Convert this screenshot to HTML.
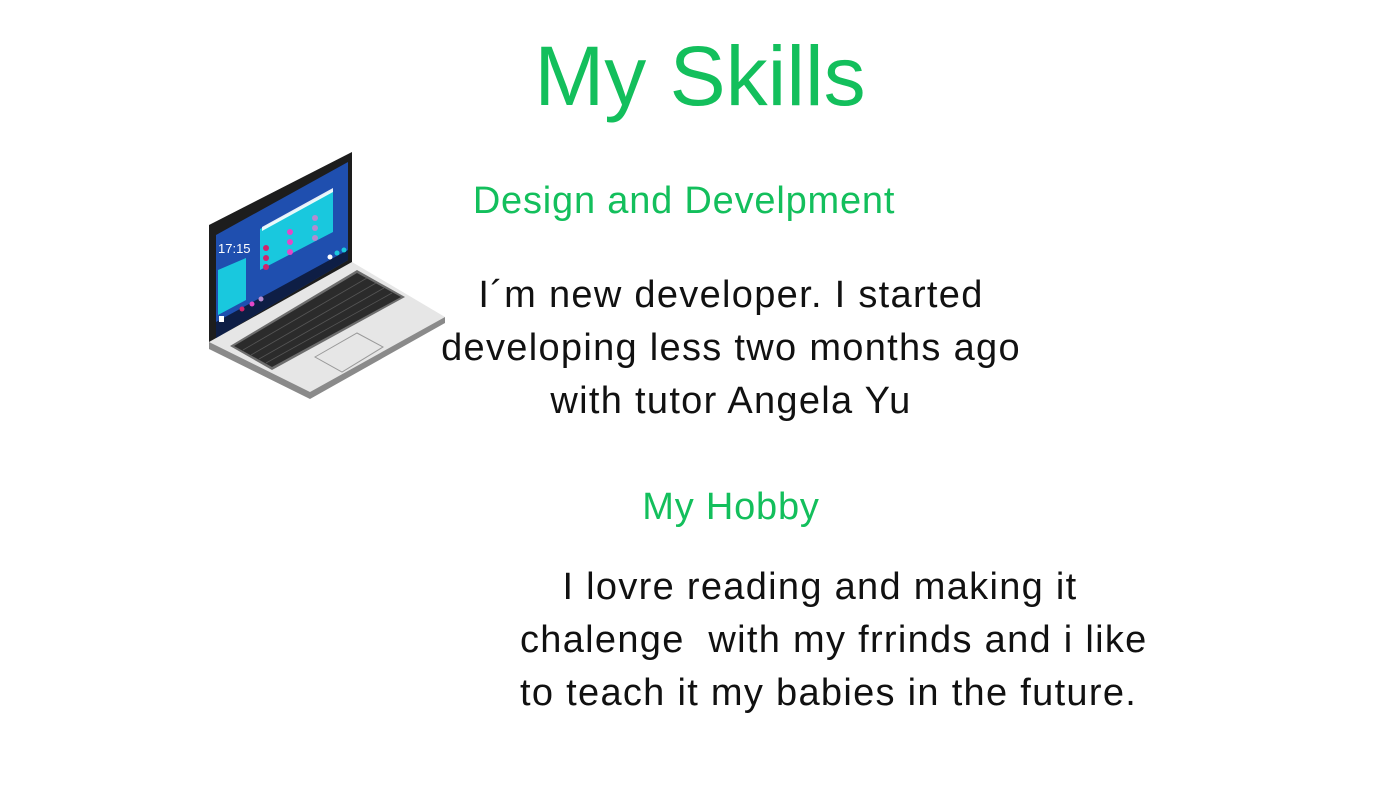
<!DOCTYPE html>
<html><head><meta charset="utf-8"><style>
html,body{margin:0;padding:0;background:#fff;width:1400px;height:800px;overflow:hidden;position:relative;font-family:"Liberation Sans","DejaVu Sans",sans-serif}
.t{position:absolute;white-space:nowrap;text-align:center}
.g{color:#13bf5c}
.b{color:#111}
</style></head><body>
<div class="t g" style="left:400px;width:600px;top:26px;font-size:84px;line-height:100px">My Skills</div>
<div class="t g" style="left:384px;width:600px;top:178px;font-size:38px;line-height:46px;letter-spacing:0.8px">Design and Develpment</div>
<div class="t b" style="left:431px;width:600px;top:269px;font-size:38px;line-height:53px;letter-spacing:1.3px">I´m new developer. I started<br>developing less two months ago<br>with tutor Angela Yu</div>
<div class="t g" style="left:431px;width:600px;top:484px;font-size:38px;line-height:46px;letter-spacing:0.8px">My Hobby</div>
<div class="t b" style="left:520px;width:600px;top:561px;font-size:38px;line-height:53px;letter-spacing:1.3px">I lovre reading and making it<br>chalenge&nbsp; with my frrinds and i like<br>to teach it my babies in the future.</div>
<svg style="position:absolute;left:0;top:0" width="1400" height="800" viewBox="0 0 1400 800">
<polygon points="209,342 352,262 445,317 310,392 209,348" fill="#e6e6e6"/>
<polygon points="209,342 310,392 445,317 445,323 310,399 209,349" fill="#8a8a8a"/>
<polygon points="230,346 357,270 405,297 272,370" fill="#6d6d6d"/>
<polygon points="234,346 357,273 401,297 272,367" fill="#2b2b2b"/>
<g stroke="#555" stroke-width="0.8">
<line x1="243" y1="350" x2="367" y2="278"/><line x1="251" y1="355" x2="376" y2="283"/><line x1="259" y1="359" x2="384" y2="288"/><line x1="266" y1="363" x2="392" y2="293"/>
</g>
<polygon points="315,357 357,333 383,347 342,372" fill="#e6e6e6" stroke="#999" stroke-width="1"/>
<polygon points="209,225 352,152 352,262 209,342" fill="#1d1d1d"/>
<polygon points="216,235 348,162 348,260 216,338" fill="#1f4faf"/>
<polygon points="216,322 348,250 348,260 216,338" fill="#0e1e45"/>
<polygon points="260,229 333,190 333,232 260,270" fill="#19c8de"/>
<polygon points="262,227 333,188 333,192 262,231" fill="#fff" opacity=".9"/>
<polygon points="218,270 246,258 246,300 218,315" fill="#19c8de"/>
<circle cx="266" cy="248" r="3" fill="#d0246c"/><circle cx="266" cy="258" r="3" fill="#d0246c"/><circle cx="266" cy="267" r="3" fill="#d0246c"/>
<circle cx="290" cy="232" r="3" fill="#e348c8"/><circle cx="290" cy="242" r="3" fill="#e348c8"/><circle cx="290" cy="252" r="3" fill="#e348c8"/>
<circle cx="315" cy="218" r="3" fill="#b58bd0"/><circle cx="315" cy="228" r="3" fill="#b58bd0"/><circle cx="315" cy="238" r="3" fill="#b58bd0"/>
<circle cx="330" cy="257" r="2.5" fill="#fff"/><circle cx="337" cy="253" r="2.5" fill="#19c8de"/><circle cx="344" cy="250" r="2.5" fill="#19c8de"/>
<circle cx="242" cy="309" r="2.5" fill="#d0246c"/><circle cx="252" cy="304" r="2.5" fill="#e348c8"/><circle cx="261" cy="299" r="2.5" fill="#b58bd0"/>
<rect x="219" y="316" width="5" height="6" fill="#fff"/>
<text x="218" y="253" font-size="13" fill="#fff" font-family="Liberation Sans">17:15</text>
</svg>
</body></html>
